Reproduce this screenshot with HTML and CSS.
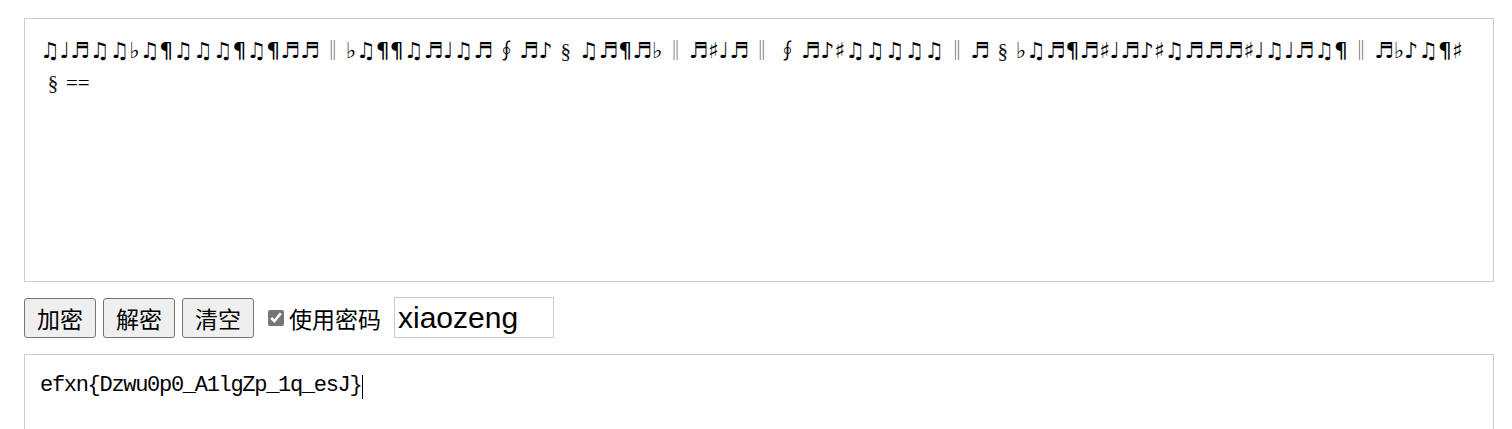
FILE: index.html
```html
<!DOCTYPE html>
<html lang="zh-CN">
<head>
<meta charset="utf-8">
<title>音符加密</title>
<link rel="stylesheet" href="styles.css">
</head>
<body>
<div class="page">
<div class="box box-source" contenteditable="true" spellcheck="false">♫♩♬♫♫♭♫¶♫♫♫¶♫¶♬♬<span class="fw bar">‖</span>♭♫¶¶♫♬♩♫♬<span class="fw">∮</span>♬♪<span class="fw">§</span>♫♬¶♬♭<span class="fw bar">‖</span>♬♯♩♬<span class="fw bar">‖</span><span class="fw">∮</span>♬♪♯♫♫♫♫♫<span class="fw bar">‖</span>♬<span class="fw">§</span>♭♫♬¶♬♯♩♬♪♯♫♬♬♬♯♩♫♩♬♫¶<span class="fw bar">‖</span>♬♭♪♫¶♯<br><span class="fw">§</span><span class="eq">==</span></div>
<div class="toolbar">
<button class="btn" type="button">加密</button>
<button class="btn" type="button">解密</button>
<button class="btn" type="button">清空</button>
<label class="check"><input type="checkbox" checked><span>使用密码</span></label>
<input class="pwd" type="text" value="xiaozeng">
</div>
<div class="result-wrap">
<textarea class="box box-result" spellcheck="false">efxn{Dzwu0p0_A1lgZp_1q_esJ}</textarea>
<span class="caret"></span>
</div>
</div>
</body>
</html>
```

FILE: styles.css
```css
html, body {
  margin: 0;
  padding: 0;
  background: #ffffff;
}
.page {
  padding: 18px 18px 0 24px;
  display: flex;
  flex-direction: column;
  gap: 16px;
}
.box {
  display: block;
  box-sizing: border-box;
  width: 1470px;
  border: 1px solid #cccccc;
  border-radius: 0;
  resize: none;
  outline: none;
  margin: 0;
  padding: 15px;
  background: #fff;
  color: #000;
  overflow: hidden;
}
.box-source {
  height: 264px;
  font-family: "DejaVu Sans", "Noto Sans CJK SC", sans-serif;
  font-size: 22px;
  line-height: 32px;
  padding-top: 15px;
  white-space: nowrap;
}
.fw {
  display: inline-block;
  width: 26px;
  text-align: center;
  font-family: "Liberation Serif", "DejaVu Serif", serif;
  font-size: 21px;
  color: #111;
}
.fw.bar {
  font-family: "Noto Sans CJK SC", sans-serif;
  font-size: 20px;
  font-weight: 300;
  color: #444;
}
.eq {
  font-family: "Liberation Serif", serif;
  font-size: 21px;
}
.toolbar {
  display: flex;
  align-items: center;
  gap: 7px;
  height: 40px;
}
.btn {
  box-sizing: border-box;
  width: 72px;
  height: 40px;
  padding: 0;
  margin: 0;
  font-family: "Noto Sans CJK SC", sans-serif;
  font-size: 23px;
  color: #000;
  background: #efefef;
  border: 1px solid #767676;
  border-radius: 3px;
}
.check {
  display: flex;
  align-items: center;
  gap: 5px;
  margin-left: 7px;
  font-family: "Noto Sans CJK SC", sans-serif;
  font-size: 23px;
  color: #000;
}
.check input {
  margin: 0;
  width: 16px;
  height: 16px;
  accent-color: #767676;
}
.pwd {
  box-sizing: border-box;
  width: 160px;
  height: 41px;
  margin: -1px 0 0 6px;
  padding: 0 3px;
  border: 1px solid #cccccc;
  outline: none;
  font-family: "Liberation Sans", Arial, sans-serif;
  font-size: 30px;
  color: #000;
}
.result-wrap {
  position: relative;
}
.box-result {
  height: 120px;
  font-family: "Liberation Mono", monospace;
  font-size: 22px;
  letter-spacing: -1.3px;
  line-height: 32px;
}
.caret {
  position: absolute;
  left: 338px;
  top: 21px;
  width: 1px;
  height: 24px;
  background: #000;
}
```
